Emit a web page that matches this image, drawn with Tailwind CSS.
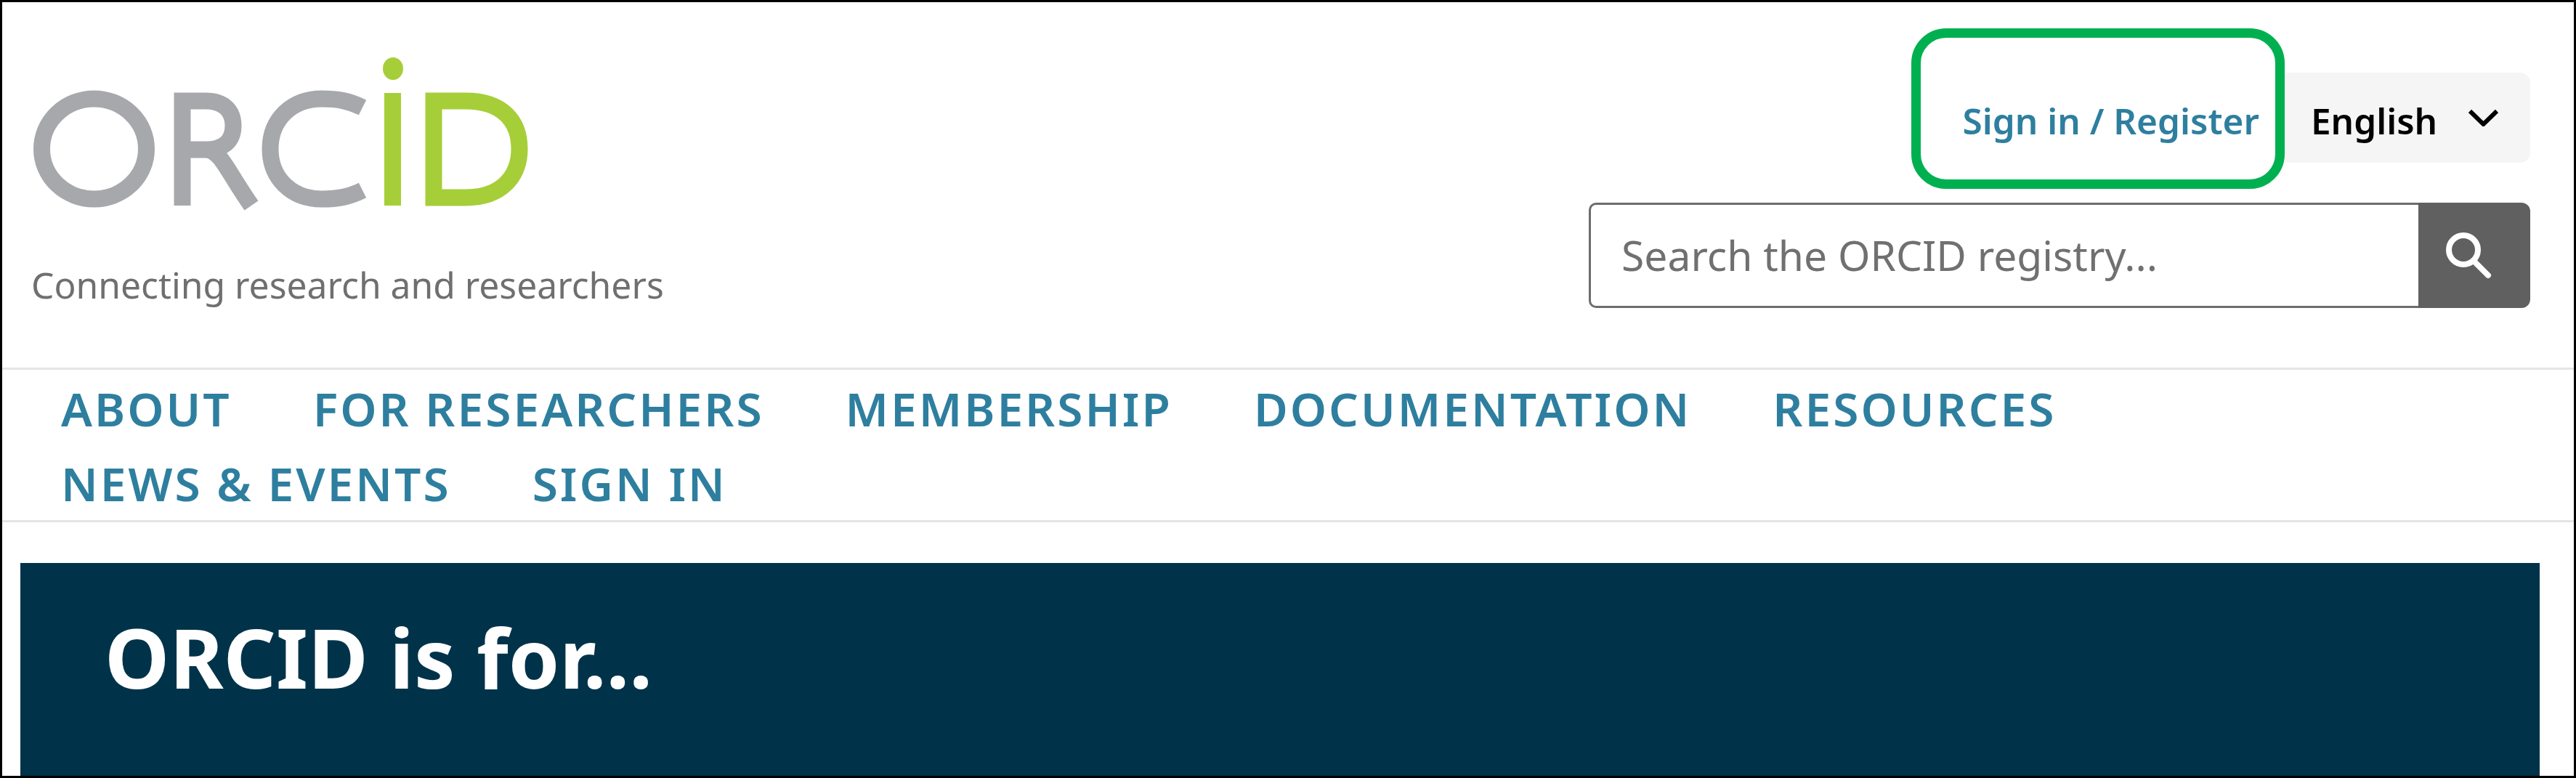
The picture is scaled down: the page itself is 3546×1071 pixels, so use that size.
<!DOCTYPE html>
<html lang="en">
<head>
  <meta charset="UTF-8" />
  <title>ORCID</title>
  <script src="https://cdn.jsdelivr.net/npm/@tailwindcss/browser@4"></script>
</head>
<body class="bg-white">
  <div class="w-[3546px] h-[1071px] border-[3px] border-black flex flex-col overflow-hidden font-['Noto_Sans',sans-serif]">

    <!-- Header -->
    <header class="h-[506px] shrink-0 flex justify-between pl-[40px] pr-[60px] border-b-[3px] border-[#e5e5e5]">
      <div class="pt-[67px]">
        <svg class="block" width="700" height="220" viewBox="42 70 700 220" fill="none" aria-label="ORCID logo">
          <g stroke="#a6a8ab" stroke-width="23">
            <ellipse cx="128.5" cy="205" rx="72" ry="69" />
            <path d="M250 283V139H282C308 139 320 153 320 173C320 195 306 206 282 206H250" />
            <path d="M285 206C304 210 312 236 345 283" />
            <path d="M498 148C480 139 464 136 442 136C400 136 371 165 371 205C371 245 400 274 442 274C464 274 480 271 498 262" />
          </g>
          <rect x="528" y="128" width="23" height="155" fill="#a6ce39" />
          <ellipse cx="540" cy="94.5" rx="14" ry="15.5" fill="#a6ce39" />
          <path d="M596 139V272H640C690 272 714 242 714 205C714 166 690 139 640 139Z" stroke="#a6ce39" stroke-width="23" />
        </svg>
        <p class="mt-[69px] text-[49.75px] leading-[66px] text-[#6f6f6f]">Connecting research and researchers</p>
      </div>

      <div class="pt-[97px] flex flex-col items-end">
        <div class="relative flex items-center h-[124px]">
          <a class="mr-[35px] pt-[8px] text-[49.5px] font-semibold text-[#2e7f9f]">Sign in / Register</a>
          <div class="w-[338px] h-full pl-[36px] pr-[44px] flex items-center justify-between bg-[#f5f5f5] rounded-r-[14px]">
            <span class="pt-[8px] text-[49.5px] font-semibold text-black">English</span>
            <svg width="41" height="24" viewBox="0 0 41 24" fill="none" stroke="#000" stroke-width="6"><path d="M2 3L20.5 21L39 3" /></svg>
          </div>
          <div class="absolute right-[338px] top-[-61px] w-[514px] h-[221px] border-[13px] border-[#00b050] rounded-[48px]"></div>
        </div>
        <div class="mt-[55px] w-[1296px] h-[145px] flex">
          <input class="flex-1 min-w-0 pl-[42px] border-[3px] border-r-0 border-[#6d6d6d] rounded-l-[10px] text-[57px] outline-none placeholder:text-[#707070]" placeholder="Search the ORCID registry..." />
          <button class="w-[154px] pr-[16px] flex items-center justify-center bg-[#606060] rounded-r-[12px]">
            <svg width="72" height="72" viewBox="0 0 72 72" fill="none" stroke="#fff" stroke-width="8"><circle cx="29" cy="28" r="20" /><path d="M45 45L63 63" stroke-linecap="round" /></svg>
          </button>
        </div>
      </div>
    </header>

    <!-- Main nav -->
    <nav class="h-[210px] shrink-0 pl-[81px] pt-[2px] border-b-[3px] border-[#e5e5e5]">
      <ul class="w-[2900px] flex flex-wrap gap-x-[112px] text-[64px] leading-[103px] font-semibold tracking-[3px] text-[#2e7f9f]">
        <li>ABOUT</li>
        <li>FOR RESEARCHERS</li>
        <li>MEMBERSHIP</li>
        <li>DOCUMENTATION</li>
        <li>RESOURCES</li>
        <li class="basis-full h-0"></li>
        <li>NEWS &amp; EVENTS</li>
        <li>SIGN IN</li>
      </ul>
    </nav>

    <!-- Hero -->
    <section class="flex-1 ml-[25px] mr-[47px] mt-[56px] pl-[116px] pt-[54px] bg-[#003349]">
      <h1 class="text-[113px] leading-[150px] font-bold text-white">ORCID is for...</h1>
    </section>
  </div>
</body>
</html>
